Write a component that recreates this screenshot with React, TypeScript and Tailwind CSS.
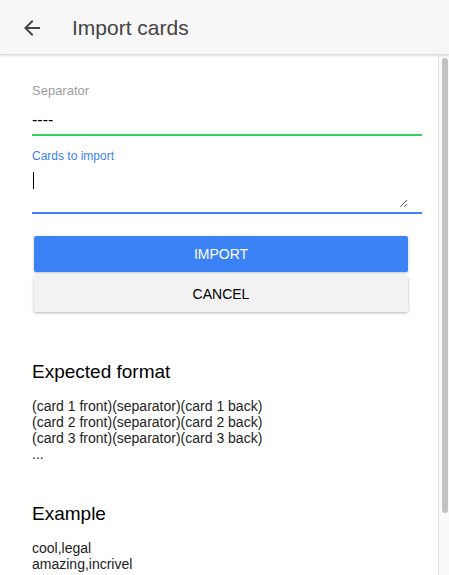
import { useRef, useEffect } from 'react'

const font = { fontFamily: '"Liberation Sans", Arial, sans-serif' }

export default function App() {
  return (
    <div className="w-[449px] h-[575px] flex flex-col bg-white overflow-hidden" style={font}>
      <Header />
      <div className="flex-1 flex min-h-0">
        <div className="flex-1 overflow-hidden pl-[32px] pr-[16px]">
          <ImportForm />
          <FormatHelp />
        </div>
        <div className="w-[11px] border-l border-[#e6e6e6] bg-[#fafafa] pt-[3px] pl-[3px] pr-[1px]">
          <div className="h-[455px] rounded-full bg-[#c1c1c1]" />
        </div>
      </div>
    </div>
  )
}

function Header() {
  return (
    <div className="h-[55px] shrink-0 flex items-center bg-[#f7f7f7] border-b border-[#dcdcdc] shadow-[0_1px_2px_rgba(0,0,0,0.12)] relative z-10">
      <svg width="24" height="24" viewBox="0 0 24 24" className="ml-[20px] mt-[1px] text-[#444]">
        <path fill="currentColor" d="M20 11H7.83l5.59-5.59L12 4l-8 8 8 8 1.41-1.41L7.83 13H20v-2z" />
      </svg>
      <div className="ml-[28px] mt-[1px] text-[21px] text-[#444]">Import cards</div>
    </div>
  )
}

function ImportForm() {
  const ref = useRef<HTMLTextAreaElement>(null)
  useEffect(() => {
    ref.current?.focus()
  }, [])

  return (
    <div>
      <div className="pt-[28px] text-[13px] leading-[16px] text-[#9e9e9e]">Separator</div>
      <input
        defaultValue="----"
        className="block w-full mt-[11px] h-[20px] text-[16px] text-black outline-none bg-transparent"
        style={font}
      />
      <div className="h-[2px] mt-[4px] bg-[#32d15a]" />

      <div className="mt-[12px] text-[12px] leading-[16px] text-[#3b82f6]">Cards to import</div>
      <div className="relative mt-[7px]">
        <textarea
          ref={ref}
          className="block w-[376px] h-[37px] text-[16px] leading-[20px] text-black outline-none bg-transparent resize-y caret-black"
          style={font}
        />
        <div className="absolute left-[1px] top-[1px] w-[1px] h-[17px] bg-black" />
      </div>
      <div className="h-[2px] mt-[4px] bg-[#3b82f6]" />

      <div className="mt-[22px] pl-[2px] pr-[14px] flex flex-col gap-[4px]">
        <button className="h-[36px] w-full rounded-[2px] bg-[#3b82f6] text-white text-[14px] shadow-[0_1px_3px_rgba(0,0,0,0.25)]">
          IMPORT
        </button>
        <button className="h-[36px] w-full rounded-[2px] bg-[#f2f2f2] text-black text-[14px] shadow-[0_1px_3px_rgba(0,0,0,0.3)]">
          CANCEL
        </button>
      </div>
    </div>
  )
}

function FormatHelp() {
  return (
    <div className="text-black">
      <h2 className="mt-[49px] text-[19px] leading-[22px] font-medium">Expected format</h2>
      <div className="mt-[15px] text-[14px] leading-[16px] text-[#222]">
        <div>(card 1 front)(separator)(card 1 back)</div>
        <div>(card 2 front)(separator)(card 2 back)</div>
        <div>(card 3 front)(separator)(card 3 back)</div>
        <div>...</div>
      </div>
      <h2 className="mt-[41px] text-[19px] leading-[22px] font-medium">Example</h2>
      <div className="mt-[15px] text-[14px] leading-[16px] text-[#222]">
        <div>cool,legal</div>
        <div>amazing,incrivel</div>
      </div>
    </div>
  )
}
